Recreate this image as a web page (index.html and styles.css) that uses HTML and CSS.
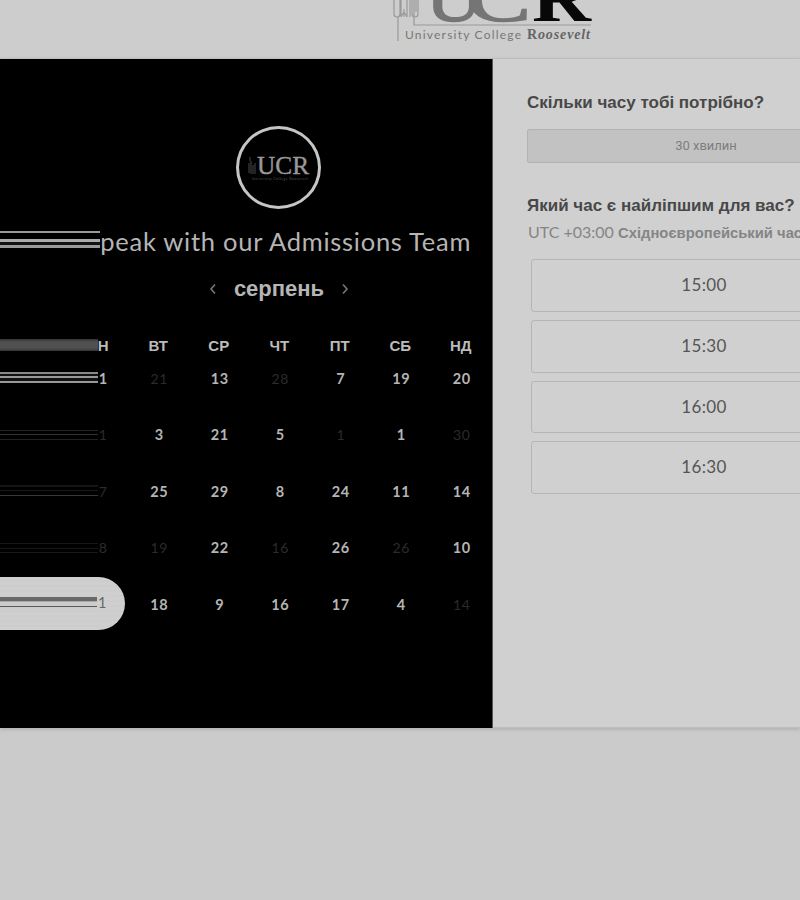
FILE: index.html
```html
<!DOCTYPE html>
<html lang="uk">
<head>
<meta charset="utf-8">
<title>Speak with our Admissions Team</title>
<link rel="stylesheet" href="styles.css">
</head>
<body>
<header class="header">
  <svg class="logo" width="206" height="46" viewBox="0 0 206 46">
    <g class="crest"><path d="M3 0v14q0 3 3 3t3-3V0M10 0v17M16 0v17M13 9v8M19 0v17M10 17l3-5 3 5M21 0v14q0 3 3 3t3-3V0M25 0v12M7 17v24M23 0v25H200"/></g>
    <text class="logo-letter" x="35" y="21" font-size="66" textLength="56" lengthAdjust="spacingAndGlyphs">U</text>
    <text class="logo-letter" x="76" y="21" font-size="66" textLength="64" lengthAdjust="spacingAndGlyphs">C</text>
    <text class="logo-letter dark" x="141" y="21" font-size="66" textLength="59" lengthAdjust="spacingAndGlyphs">R</text>
    <text class="logo-college" x="14" y="39" textLength="116">University College</text>
    <text class="logo-name" x="136" y="39" textLength="63"><tspan class="cap">R</tspan>oosevelt</text>
  </svg>
</header>
<main class="card">
  <section class="calendar">
    <div class="avatar">
      <svg width="66" height="34" viewBox="0 0 66 34">
        <path class="mini-crest" d="M3 12v10M5 10v13M7 14v9M9 12v11M4 6v4"/>
        <text class="mini-letter" x="11" y="23" textLength="52" lengthAdjust="spacingAndGlyphs">UCR</text>
        <text class="mini-caption" x="6" y="28.5" textLength="56">University College Roosevelt</text>
      </svg>
    </div>
    <h1 class="title"><i class="streak s-title"></i><span>Speak with our Admissions Team</span></h1>
    <div class="month">
      <svg width="8" height="12" viewBox="0 0 8 12"><path d="M6 1.5L2 6l4 4.5"/></svg>
      <span>серпень</span>
      <svg width="8" height="12" viewBox="0 0 8 12"><path d="M2 1.5L6 6l-4 4.5"/></svg>
    </div>
    <div class="week names"><i class="streak s-names"></i><b>ПН</b><b>ВТ</b><b>СР</b><b>ЧТ</b><b>ПТ</b><b>СБ</b><b>НД</b></div>
    <div class="week"><i class="streak s-one"></i><b>31</b><span>21</span><b>13</b><span>28</span><b>7</b><b>19</b><b>20</b></div>
    <div class="week"><i class="streak s-two"></i><span>31</span><b>3</b><b>21</b><b>5</b><span>1</span><b>1</b><span>30</span></div>
    <div class="week"><i class="streak s-three"></i><span>27</span><b>25</b><b>29</b><b>8</b><b>24</b><b>11</b><b>14</b></div>
    <div class="week"><i class="streak s-four"></i><span>28</span><span>19</span><b>22</b><span>16</span><b>26</b><span>26</span><b>10</b></div>
    <div class="week"><div class="selected"><i class="streak s-five"></i><span>1</span></div><em></em><b>18</b><b>9</b><b>16</b><b>17</b><b>4</b><span>14</span></div>
  </section>
  <section class="booking">
    <h2>Скільки часу тобі потрібно?</h2>
    <div class="duration">30 хвилин</div>
    <h2 class="when">Який час є найліпшим для вас?</h2>
    <p class="zone"><span>UTC +03:00</span> <b>Східноєвропейський час</b></p>
    <div class="slots">
      <div class="slot">15:00</div>
      <div class="slot">15:30</div>
      <div class="slot">16:00</div>
      <div class="slot">16:30</div>
    </div>
  </section>
</main>
</body>
</html>
```
FILE: styles.css
```css
* { box-sizing: border-box; }
body { margin: 0; width: 800px; height: 900px; overflow: hidden; background: #cbcbcb; font-family: Lato, "Liberation Sans", sans-serif; }
.header { height: 59px; padding-left: 391px; border-bottom: 1px solid #c4c4c4; background: #cdcdcd; }
.logo { display: block; }
.crest { fill: none; stroke: #999; stroke-width: 1.2; }
.logo-letter { font-family: "Liberation Serif", serif; fill: #757575; stroke: #757575; stroke-width: 1.6px; }
.logo-letter.dark { fill: #080808; stroke: none; font-weight: bold; }
.logo-college { font: 12px Lato, sans-serif; fill: #777; }
.logo-name { font: italic bold 14px "Liberation Serif", serif; fill: #656565; }
.logo-name .cap { font-style: normal; }
.card { display: flex; height: 669px; box-shadow: 0 1px 4px #aaa; }
.calendar { width: 493px; background: #000; border-right: 1px solid #555; color: #b5b5b5; }
.avatar { display: flex; align-items: center; justify-content: center; width: 85px; height: 83px; margin: 67px 0 0 236px; border: 3px solid #c5c5c5; border-radius: 50%; }
.mini-crest { stroke: #383838; fill: none; stroke-width: 1.3; }
.mini-letter { font: 26px "Liberation Serif", serif; fill: #999; stroke: #999; stroke-width: .4px; }
.mini-caption { font: 3.5px Lato, sans-serif; fill: #555; }
.title { position: relative; height: 36px; margin: 14px 0 0; padding-left: 86px; font-size: 25.5px; line-height: 36px; font-weight: 400; letter-spacing: .73px; white-space: nowrap; }
.streak { position: absolute; left: 0; width: 98px; z-index: 1; background-color: #000; }
.s-title { top: 4px; width: 100px; height: 28px; background: linear-gradient(#000 0 4px, #999 4px 6px, #000 6px 12px, #aaa 12px 15px, #111 15px 18px, #999 18px 21px, #000 21px); }
.s-names { top: 9px; height: 12px; background: linear-gradient(#333, #505050 3px 9px, #333); }
.s-one { top: 9px; height: 12px; background: linear-gradient(#888 0 2px, #111 2px 4px, #999 4px 6px, #111 6px 9px, #999 9px 11px, #000 11px); }
.s-two { top: 10px; height: 10px; background: linear-gradient(#222 0 1px, #000 1px 4px, #303030 4px 5px, #000 5px 9px, #222 9px); }
.s-three { top: 9px; height: 12px; background: linear-gradient(#151515 0 2px, #000 2px 5px, #181818 5px 6px, #000 6px 10px, #383838 10px 11px, #000 11px); }
.s-four { top: 10px; height: 10px; background: linear-gradient(#151515 0 1px, #000 1px 5px, #151515 5px 6px, #000 6px 9px, #181818 9px); }
.s-five { top: 20px; width: 97px; height: 12px; background: linear-gradient(#686868 0 4px, #aaa 4px 5px, #ccc 5px 9px, #5a5a5a 9px 10px, #ccc 10px); }
.month { display: flex; align-items: center; height: 30px; margin: 15px 0 0 209px; gap: 16px; font: bold 22px/30px "Liberation Sans", sans-serif; }
.month span { width: 92px; text-align: center; }
.month svg { fill: none; stroke: #777; stroke-width: 1.6; }
.week { position: relative; display: grid; grid-template-columns: repeat(7, 60.5px); height: 30px; margin-bottom: 26.5px; padding-left: 68.5px; align-items: center; text-align: center; font-size: 14.5px; letter-spacing: .6px; }
.names { margin: 26px 0 3px; padding-left: 67.5px; font-family: "Liberation Sans", sans-serif; font-size: 15px; letter-spacing: 0; }
.names b { color: #bbb; }
.week > span { color: #2b2b2b; font-weight: 400; font-size: 14px; }
.selected { position: absolute; left: 0; top: -12px; width: 125px; height: 53px; padding-left: 98px; border-radius: 0 27px 27px 0; background: repeating-linear-gradient(#cfcfcf 0 3px, #cdcdcd 3px 5px); color: #666; line-height: 51px; text-align: left; }
.booking { width: 307px; background: #d0d0d0; padding: 32px 0 0 34px; white-space: nowrap; overflow: hidden; border-bottom: 1px solid #bdbdbd; color: #484848; }
h2 { margin: 0; font: bold 17px/24px "Liberation Sans", sans-serif; }
.duration { width: 358px; height: 34px; margin-top: 14px; border: 1px solid #b3b3b3; border-radius: 2px; background: #c2c2c2; color: #7e7e7e; font: 13px/32px Roboto, sans-serif; text-align: center; }
.when { margin-top: 31px; }
.zone { margin: 2px 0 0 1px; color: #858585; font-size: 16px; line-height: 24px; }
.zone b { font: bold 14.8px "Liberation Sans", sans-serif; }
.slots { display: flex; flex-direction: column; gap: 8px; margin: 15px 0 0 4px; }
.slot { width: 346px; height: 52.8px; border: 1px solid #b5b5b5; border-radius: 3px; color: #555; font-size: 17px; line-height: 50px; letter-spacing: .4px; text-align: center; }
```
